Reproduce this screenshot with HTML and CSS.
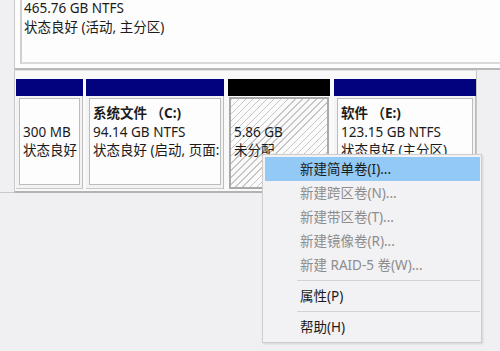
FILE: index.html
```html
<!DOCTYPE html>
<html>
<head>
<meta charset="utf-8">
<link rel="stylesheet" href="styles.css">
</head>
<body>
<div class="screen">
  <div class="disk-top">
    <div class="label-cell"></div>
    <div class="top-area">
      <div class="top-box">
        <div class="line">465.76 GB NTFS</div>
        <div class="line">状态良好 (活动, 主分区)</div>
      </div>
    </div>
  </div>
  <div class="disk-row">
    <div class="label-cell label-cell-2"></div>
    <div class="disk-area">
      <div class="part w1">
        <div class="bar"></div>
        <div class="body"><div class="box">
          <div class="line">&nbsp;</div>
          <div class="line">300 MB</div>
          <div class="line">状态良好</div>
        </div></div>
      </div>
      <div class="part w2">
        <div class="bar"></div>
        <div class="body"><div class="box">
          <div class="line bold">系统文件 （C:)</div>
          <div class="line">94.14 GB NTFS</div>
          <div class="line">状态良好 (启动, 页面:</div>
        </div></div>
      </div>
      <div class="part w3">
        <div class="bar black"></div>
        <div class="hatch">
          <div class="line">&nbsp;</div>
          <div class="line">5.86 GB</div>
          <div class="line">未分配</div>
        </div>
      </div>
      <div class="part w4">
        <div class="bar"></div>
        <div class="body"><div class="box">
          <div class="line bold">软件 （E:)</div>
          <div class="line">123.15 GB NTFS</div>
          <div class="line">状态良好 (主分区)</div>
        </div></div>
      </div>
    </div>
  </div>

  <div class="menu">
    <div class="item active">新建简单卷(I)...</div>
    <div class="item disabled">新建跨区卷(N)...</div>
    <div class="item disabled">新建带区卷(T)...</div>
    <div class="item disabled">新建镜像卷(R)...</div>
    <div class="item disabled">新建 RAID-5 卷(W)...</div>
    <div class="sep"></div>
    <div class="item">属性(P)</div>
    <div class="sep"></div>
    <div class="item">帮助(H)</div>
  </div>
</div>
</body>
</html>
```

FILE: styles.css
```css
html, body {
  margin: 0;
  padding: 0;
}
body {
  width: 500px;
  height: 351px;
  overflow: hidden;
  background: #f0eff2;
  font-family: "Noto Sans", "Noto Sans CJK SC", sans-serif;
  font-size: 13.5px;
  color: #1b1b1b;
}
.screen {
  position: relative;
  width: 500px;
  height: 351px;
}
.line {
  line-height: 18.5px;
  white-space: nowrap;
}
.bold {
  font-weight: bold;
}

/* top disk row */
.disk-top {
  display: flex;
  height: 70px;
}
.label-cell {
  width: 14px;
  background: #f0eff2;
  border-right: 1px solid #c9c9c9;
  flex: none;
}
.top-area {
  flex: 1;
  background: #fdfdfd;
  border-bottom: 2px solid #b9b9b9;
  padding: 0 0 4px 5px;
  display: flex;
}
.top-box {
  flex: 1;
  border-left: 2px solid #cfcfcf;
  border-bottom: 2px solid #dadada;
  padding: 0 0 0 2px;
}
.top-box .line:first-child {
  margin-top: -1px;
}

/* second disk row */
.disk-row {
  display: flex;
  height: 123px;
}
.label-cell-2 {
  border-bottom: 1px solid #c9c9c9;
}
.disk-area {
  width: 462px;
  flex: none;
  display: flex;
  gap: 3px;
  background: #f9f9f9;
  border-top: 1px solid #e2e2e2;
  border-right: 1px solid #c6c6c6;
  border-bottom: 2px solid #b3b3b3;
  padding: 8px 0 2px 1px;
  box-sizing: border-box;
}
.part {
  display: flex;
  flex-direction: column;
  flex: none;
}
.w1 { width: 67px; }
.w2 { width: 138px; }
.w3 { width: 102px; margin-left: 1px; }
.w4 { width: 142px; margin-left: 1px; }
.bar {
  height: 17px;
  background: #02027f;
  flex: none;
}
.bar.black {
  background: #000;
}
.body {
  flex: 1;
  display: flex;
  padding: 2px 2px 3px 3px;
  background: #f3f3f3;
  border-right: 1px solid #bdbdbd;
  border-bottom: 1px solid #c9c9c9;
  min-width: 0;
}
.box {
  flex: 1;
  background: #fdfdfd;
  border: 1px solid #bcbcbc;
  padding: 5px 0 0 3px;
  overflow: hidden;
  min-width: 0;
}
.hatch {
  flex: 1;
  margin: 1px 1px 0 1px;
  border: 2px solid #a9a9a9;
  padding: 5px 0 0 3px;
  background: repeating-linear-gradient(135deg, #c6c6c6 0 1px, #fbfbfb 1px 5px);
  overflow: hidden;
}

/* context menu */
.menu {
  position: absolute;
  left: 262px;
  top: 154px;
  width: 220px;
  height: 189px;
  box-sizing: border-box;
  background: #f2f1f3;
  border: 1px solid #cdcdcd;
  padding: 2px 1px 2px 2px;
  box-shadow: 1px 1px 2px rgba(0,0,0,0.12);
}
.item {
  height: 24px;
  line-height: 24px;
  padding-left: 35px;
  white-space: nowrap;
  color: #1b1b1b;
}
.item.active {
  background: #93c9f5;
}
.item.disabled {
  color: #8d8d8d;
}
.sep {
  height: 1px;
  background: #d2d2d2;
  margin: 3px 0 3px 32px;
}
```
